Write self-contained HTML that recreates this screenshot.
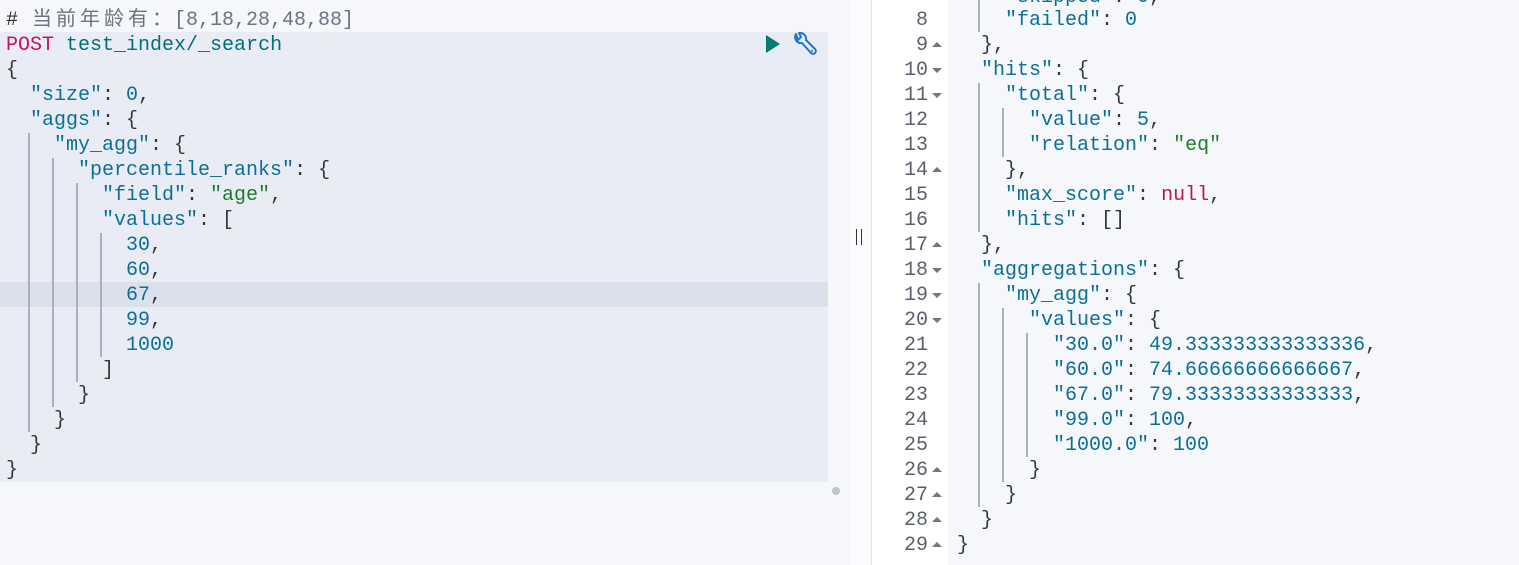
<!DOCTYPE html>
<html><head><meta charset="utf-8"><style>
body{margin:0;width:1519px;height:565px;overflow:hidden;background:#f5f7fa;position:relative;font-family:"Liberation Mono","Noto Sans CJK SC",monospace;font-size:20px;}
.l{position:absolute;height:25px;line-height:25px;white-space:pre;color:#343741;}
.k{color:#0b6f98}.s{color:#1c7d2d}.n{color:#0b6f98}.r{color:#bd1747}.c{color:#6a7483}.p{color:#c8106a}.u{color:#00707a}
.cj{display:inline-block;width:24px;text-align:center;color:#6a7483}
.g{position:absolute;width:2px;background:#a9b0bd;}
.num{position:absolute;left:872px;width:56px;text-align:right;color:#5a606b;height:25px;line-height:25px;}
.ar{position:absolute;left:932px;width:0;height:0;border-left:5px solid transparent;border-right:5px solid transparent;}
.up{border-bottom:5px solid #777;}.dn{border-top:5px solid #777;}
</style></head><body>
<div style="position:absolute;left:0;top:32px;width:828px;height:450px;background:#e9ecf4"></div>
<div style="position:absolute;left:0;top:282px;width:828px;height:25px;background:#dbe1ea"></div>
<div style="position:absolute;left:832px;top:487px;width:8px;height:8px;border-radius:50%;background:#bfc3ca"></div>
<div style="position:absolute;left:849px;top:0;width:22px;height:565px;background:#fafbfd"></div>
<div style="position:absolute;left:871px;top:0;width:1px;height:565px;background:#e3e6ec"></div>
<div style="position:absolute;left:872px;top:0;width:76px;height:565px;background:#fff"></div>
<div style="position:absolute;left:856px;top:229px;width:1px;height:16px;background:#333"></div>
<div style="position:absolute;left:861px;top:229px;width:1px;height:16px;background:#333"></div>
<svg style="position:absolute;left:764px;top:34px" width="18" height="20"><path d="M2 1 L16 10 L2 19 Z" fill="#017d73"/></svg>
<svg style="position:absolute;left:791px;top:31px" width="28" height="28" viewBox="0 0 28 28"><path d="M5 3 A6 6 0 0 0 11 12 L20 22 A2.5 2.5 0 0 0 24 18 L15 9 A6 6 0 0 0 8 2 L10 6 L7 9 Z" fill="none" stroke="#1f77d0" stroke-width="2" stroke-linejoin="round"/><circle cx="21" cy="20" r="1" fill="#1f77d0"/></svg>

<div class="l" style="left:6px;top:8px"><span style="color:#333">#</span> <span class="cj">当</span><span class="cj">前</span><span class="cj">年</span><span class="cj">龄</span><span class="cj">有</span><span class="cj">：</span><span class="c">[8,18,28,48,88]</span></div>
<div class="l" style="left:6px;top:33px"><span class="p">POST</span> <span class="u">test_index/_search</span></div>
<div class="l" style="left:6px;top:58px">{</div>
<div class="l" style="left:6px;top:83px">  <span class="k">"size"</span>: <span class="n">0</span>,</div>
<div class="l" style="left:6px;top:108px">  <span class="k">"aggs"</span>: {</div>
<div class="l" style="left:6px;top:133px">    <span class="k">"my_agg"</span>: {</div>
<div class="l" style="left:6px;top:158px">      <span class="k">"percentile_ranks"</span>: {</div>
<div class="l" style="left:6px;top:183px">        <span class="k">"field"</span>: <span class="s">"age"</span>,</div>
<div class="l" style="left:6px;top:208px">        <span class="k">"values"</span>: [</div>
<div class="l" style="left:6px;top:233px">          <span class="n">30</span>,</div>
<div class="l" style="left:6px;top:258px">          <span class="n">60</span>,</div>
<div class="l" style="left:6px;top:283px">          <span class="n">67</span>,</div>
<div class="l" style="left:6px;top:308px">          <span class="n">99</span>,</div>
<div class="l" style="left:6px;top:333px">          <span class="n">1000</span></div>
<div class="l" style="left:6px;top:358px">        ]</div>
<div class="l" style="left:6px;top:383px">      }</div>
<div class="l" style="left:6px;top:408px">    }</div>
<div class="l" style="left:6px;top:433px">  }</div>
<div class="l" style="left:6px;top:458px">}</div>
<div class="g" style="left:28px;top:133px;height:299px"></div>
<div class="g" style="left:52px;top:158px;height:249px"></div>
<div class="g" style="left:76px;top:183px;height:199px"></div>
<div class="g" style="left:100px;top:233px;height:124px"></div>

<div class="num" style="top:-17px">7</div>
<div class="num" style="top:8px">8</div>
<div class="num" style="top:33px">9</div><div class="ar up" style="top:42px"></div>
<div class="num" style="top:58px">10</div><div class="ar dn" style="top:68px"></div>
<div class="num" style="top:83px">11</div><div class="ar dn" style="top:93px"></div>
<div class="num" style="top:108px">12</div>
<div class="num" style="top:133px">13</div>
<div class="num" style="top:158px">14</div><div class="ar up" style="top:167px"></div>
<div class="num" style="top:183px">15</div>
<div class="num" style="top:208px">16</div>
<div class="num" style="top:233px">17</div><div class="ar up" style="top:242px"></div>
<div class="num" style="top:258px">18</div><div class="ar dn" style="top:268px"></div>
<div class="num" style="top:283px">19</div><div class="ar dn" style="top:293px"></div>
<div class="num" style="top:308px">20</div><div class="ar dn" style="top:318px"></div>
<div class="num" style="top:333px">21</div>
<div class="num" style="top:358px">22</div>
<div class="num" style="top:383px">23</div>
<div class="num" style="top:408px">24</div>
<div class="num" style="top:433px">25</div>
<div class="num" style="top:458px">26</div><div class="ar up" style="top:467px"></div>
<div class="num" style="top:483px">27</div><div class="ar up" style="top:492px"></div>
<div class="num" style="top:508px">28</div><div class="ar up" style="top:517px"></div>
<div class="num" style="top:533px">29</div><div class="ar up" style="top:542px"></div>

<div class="l" style="left:957px;top:-15px">    <span class="k">"skipped"</span>: <span class="n">0</span>,</div>
<div class="l" style="left:957px;top:8px">    <span class="k">"failed"</span>: <span class="n">0</span></div>
<div class="l" style="left:957px;top:33px">  },</div>
<div class="l" style="left:957px;top:58px">  <span class="k">"hits"</span>: {</div>
<div class="l" style="left:957px;top:83px">    <span class="k">"total"</span>: {</div>
<div class="l" style="left:957px;top:108px">      <span class="k">"value"</span>: <span class="n">5</span>,</div>
<div class="l" style="left:957px;top:133px">      <span class="k">"relation"</span>: <span class="s">"eq"</span></div>
<div class="l" style="left:957px;top:158px">    },</div>
<div class="l" style="left:957px;top:183px">    <span class="k">"max_score"</span>: <span class="r">null</span>,</div>
<div class="l" style="left:957px;top:208px">    <span class="k">"hits"</span>: []</div>
<div class="l" style="left:957px;top:233px">  },</div>
<div class="l" style="left:957px;top:258px">  <span class="k">"aggregations"</span>: {</div>
<div class="l" style="left:957px;top:283px">    <span class="k">"my_agg"</span>: {</div>
<div class="l" style="left:957px;top:308px">      <span class="k">"values"</span>: {</div>
<div class="l" style="left:957px;top:333px">        <span class="k">"30.0"</span>: <span class="n">49.333333333333336</span>,</div>
<div class="l" style="left:957px;top:358px">        <span class="k">"60.0"</span>: <span class="n">74.66666666666667</span>,</div>
<div class="l" style="left:957px;top:383px">        <span class="k">"67.0"</span>: <span class="n">79.33333333333333</span>,</div>
<div class="l" style="left:957px;top:408px">        <span class="k">"99.0"</span>: <span class="n">100</span>,</div>
<div class="l" style="left:957px;top:433px">        <span class="k">"1000.0"</span>: <span class="n">100</span></div>
<div class="l" style="left:957px;top:458px">      }</div>
<div class="l" style="left:957px;top:483px">    }</div>
<div class="l" style="left:957px;top:508px">  }</div>
<div class="l" style="left:957px;top:533px">}</div>
<div class="g" style="left:978px;top:0;height:32px"></div>
<div class="g" style="left:978px;top:83px;height:149px"></div>
<div class="g" style="left:978px;top:283px;height:224px"></div>
<div class="g" style="left:1002px;top:108px;height:49px"></div>
<div class="g" style="left:1002px;top:308px;height:174px"></div>
<div class="g" style="left:1026px;top:333px;height:124px"></div>
</body></html>
